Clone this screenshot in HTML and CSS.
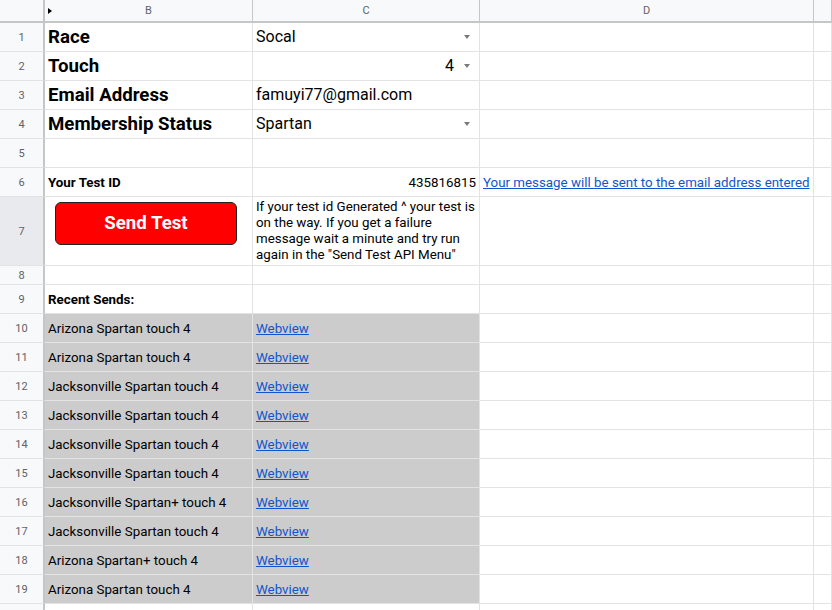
FILE: index.html
```html
<!DOCTYPE html>
<html>
<head>
<meta charset="utf-8">
<link rel="stylesheet" href="styles.css">
</head>
<body>
<div class="sheet">
  <div class="corner"></div>
  <div class="ch chb"><span class="hid"></span><span class="lt">B</span></div>
  <div class="ch">C</div>
  <div class="ch">D</div>
  <div class="ch"></div>

  <div class="rh">1</div>
  <div class="c big b">Race</div>
  <div class="c mid dd"><span class="v">Socal</span><span class="arr"></span></div>
  <div class="c"></div><div class="c"></div>

  <div class="rh">2</div>
  <div class="c big b">Touch</div>
  <div class="c mid dd"><span class="v r">4</span><span class="arr"></span></div>
  <div class="c"></div><div class="c"></div>

  <div class="rh">3</div>
  <div class="c big b">Email Address</div>
  <div class="c mid">famuyi77@gmail.com</div>
  <div class="c"></div><div class="c"></div>

  <div class="rh">4</div>
  <div class="c big b">Membership Status</div>
  <div class="c mid dd"><span class="v">Spartan</span><span class="arr"></span></div>
  <div class="c"></div><div class="c"></div>

  <div class="rh">5</div>
  <div class="c"></div><div class="c"></div><div class="c"></div><div class="c"></div>

  <div class="rh">6</div>
  <div class="c b">Your Test ID</div>
  <div class="c right">435816815</div>
  <div class="c"><a class="link" href="#">Your message will be sent to the email address entered</a></div>
  <div class="c"></div>

  <div class="rh sel">7</div>
  <div class="c btncell"><button class="send">Send Test</button></div>
  <div class="c wrap">If your test id Generated ^ your test is<br>on the way. If you get a failure<br>message wait a minute and try run<br>again in the "Send Test API Menu"</div>
  <div class="c"></div><div class="c"></div>

  <div class="rh">8</div>
  <div class="c"></div><div class="c"></div><div class="c"></div><div class="c"></div>

  <div class="rh">9</div>
  <div class="c b">Recent Sends:</div>
  <div class="c"></div><div class="c"></div><div class="c"></div>

  <div class="rh">10</div>
  <div class="c g">Arizona Spartan touch 4</div>
  <div class="c g"><a class="link" href="#">Webview</a></div>
  <div class="c"></div><div class="c"></div>

  <div class="rh">11</div>
  <div class="c g">Arizona Spartan touch 4</div>
  <div class="c g"><a class="link" href="#">Webview</a></div>
  <div class="c"></div><div class="c"></div>

  <div class="rh">12</div>
  <div class="c g">Jacksonville Spartan touch 4</div>
  <div class="c g"><a class="link" href="#">Webview</a></div>
  <div class="c"></div><div class="c"></div>

  <div class="rh">13</div>
  <div class="c g">Jacksonville Spartan touch 4</div>
  <div class="c g"><a class="link" href="#">Webview</a></div>
  <div class="c"></div><div class="c"></div>

  <div class="rh">14</div>
  <div class="c g">Jacksonville Spartan touch 4</div>
  <div class="c g"><a class="link" href="#">Webview</a></div>
  <div class="c"></div><div class="c"></div>

  <div class="rh">15</div>
  <div class="c g">Jacksonville Spartan touch 4</div>
  <div class="c g"><a class="link" href="#">Webview</a></div>
  <div class="c"></div><div class="c"></div>

  <div class="rh">16</div>
  <div class="c g">Jacksonville Spartan+ touch 4</div>
  <div class="c g"><a class="link" href="#">Webview</a></div>
  <div class="c"></div><div class="c"></div>

  <div class="rh">17</div>
  <div class="c g">Jacksonville Spartan touch 4</div>
  <div class="c g"><a class="link" href="#">Webview</a></div>
  <div class="c"></div><div class="c"></div>

  <div class="rh">18</div>
  <div class="c g">Arizona Spartan+ touch 4</div>
  <div class="c g"><a class="link" href="#">Webview</a></div>
  <div class="c"></div><div class="c"></div>

  <div class="rh">19</div>
  <div class="c g">Arizona Spartan touch 4</div>
  <div class="c g"><a class="link" href="#">Webview</a></div>
  <div class="c"></div><div class="c"></div>

  <div class="rh"></div>
  <div class="c"></div><div class="c"></div><div class="c"></div><div class="c"></div>
</div>
</body>
</html>
```
FILE: styles.css
```css
html, body {
  margin: 0;
  padding: 0;
  background: #ffffff;
  overflow: hidden;
}

.sheet {
  display: grid;
  grid-template-columns: 45px 208px 227px 334px 1fr;
  grid-template-rows: 23px repeat(6, 29px) 69px 19px repeat(12, 29px);
  width: 832px;
  font-family: Roboto, "Liberation Sans", Arial, sans-serif;
  font-size: 13.33px;
  color: #000000;
}

.sheet > div {
  box-sizing: border-box;
  min-width: 0;
  overflow: hidden;
}

.corner {
  background: #f8f9fa;
  border-right: 2px solid #c4c7c5;
  border-bottom: 2px solid #c4c7c5;
}

.ch {
  background: #f8f9fa;
  border-right: 1px solid #c4c7c5;
  border-bottom: 2px solid #c4c7c5;
  display: flex;
  align-items: center;
  justify-content: center;
  font-size: 11px;
  color: #5f6368;
  position: relative;
}

.hid {
  position: absolute;
  left: 3px;
  top: 8px;
  width: 0;
  height: 0;
  border-top: 3px solid transparent;
  border-bottom: 3px solid transparent;
  border-left: 4px solid #000000;
}

.rh {
  background: #f8f9fa;
  border-right: 2px solid #c4c7c5;
  border-bottom: 1px solid #e2e3e3;
  display: flex;
  align-items: center;
  justify-content: center;
  font-size: 11px;
  color: #5f6368;
}

.rh.sel {
  background: #e8eaed;
}

.c {
  border-right: 1px solid #e2e3e3;
  border-bottom: 1px solid #e2e3e3;
  display: flex;
  align-items: flex-end;
  padding: 0 3px 5px 3px;
  line-height: 17px;
  white-space: nowrap;
}

.c.big {
  font-size: 18.67px;
  line-height: 22px;
  padding-bottom: 3px;
}

.c.mid {
  font-size: 16px;
  line-height: 20px;
  padding-bottom: 4px;
}

.b {
  font-weight: bold;
}

.right {
  justify-content: flex-end;
}

.dd .v {
  flex: 1;
}

.dd .v.r {
  text-align: right;
}

.arr {
  align-self: center;
  width: 0;
  height: 0;
  margin: 4px 6px 0 10px;
  border-left: 3.5px solid transparent;
  border-right: 3.5px solid transparent;
  border-top: 4px solid #7a7a7a;
}

.c.g {
  background: #cccccc;
}

.link {
  color: #1155cc;
  text-decoration: underline;
}

.c.wrap {
  line-height: 16px;
  padding-bottom: 2px;
}

.c.btncell {
  align-items: flex-start;
  padding: 5px 0 0 10px;
}

.send {
  width: 182px;
  height: 43px;
  box-sizing: border-box;
  background: #ff0000;
  border: 1px solid #222222;
  border-radius: 6px;
  color: #ffffff;
  font-family: Roboto, "Liberation Sans", Arial, sans-serif;
  font-weight: bold;
  font-size: 18.67px;
  padding: 0 0 2px 0;
  cursor: pointer;
}
```
